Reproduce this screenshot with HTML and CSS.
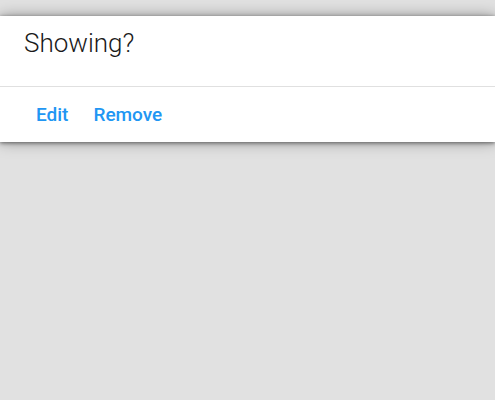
FILE: index.html
```html
<!DOCTYPE html>
<html>
<head>
<meta charset="utf-8">
<link rel="stylesheet" href="styles.css">
</head>
<body>
<div class="card">
  <div class="card-title">Showing?</div>
  <div class="card-actions">
    <span class="action">Edit</span>
    <span class="action">Remove</span>
  </div>
</div>
</body>
</html>
```
FILE: styles.css
```css
html, body {
  margin: 0;
  padding: 0;
  background: #e1e1e1;
  height: 100%;
}
body {
  font-family: Roboto, "Liberation Sans", sans-serif;
  padding-top: 16px;
  box-sizing: border-box;
}
.card {
  background: #fff;
  box-shadow: 0 1px 4px rgba(0, 0, 0, 0.5), 0 0 14px rgba(0, 0, 0, 0.35);
}
.card-title {
  height: 71px;
  box-sizing: border-box;
  padding: 12px 24px 0;
  font-size: 26px;
  font-weight: 300;
  color: #1a1a1a;
  border-bottom: 1px solid #e0e0e0;
}
.card-actions {
  height: 55px;
  display: flex;
  align-items: center;
  gap: 25px;
  padding: 0 36px;
}
.action {
  color: #2196f3;
  font-size: 19px;
  font-weight: 500;
}
```
